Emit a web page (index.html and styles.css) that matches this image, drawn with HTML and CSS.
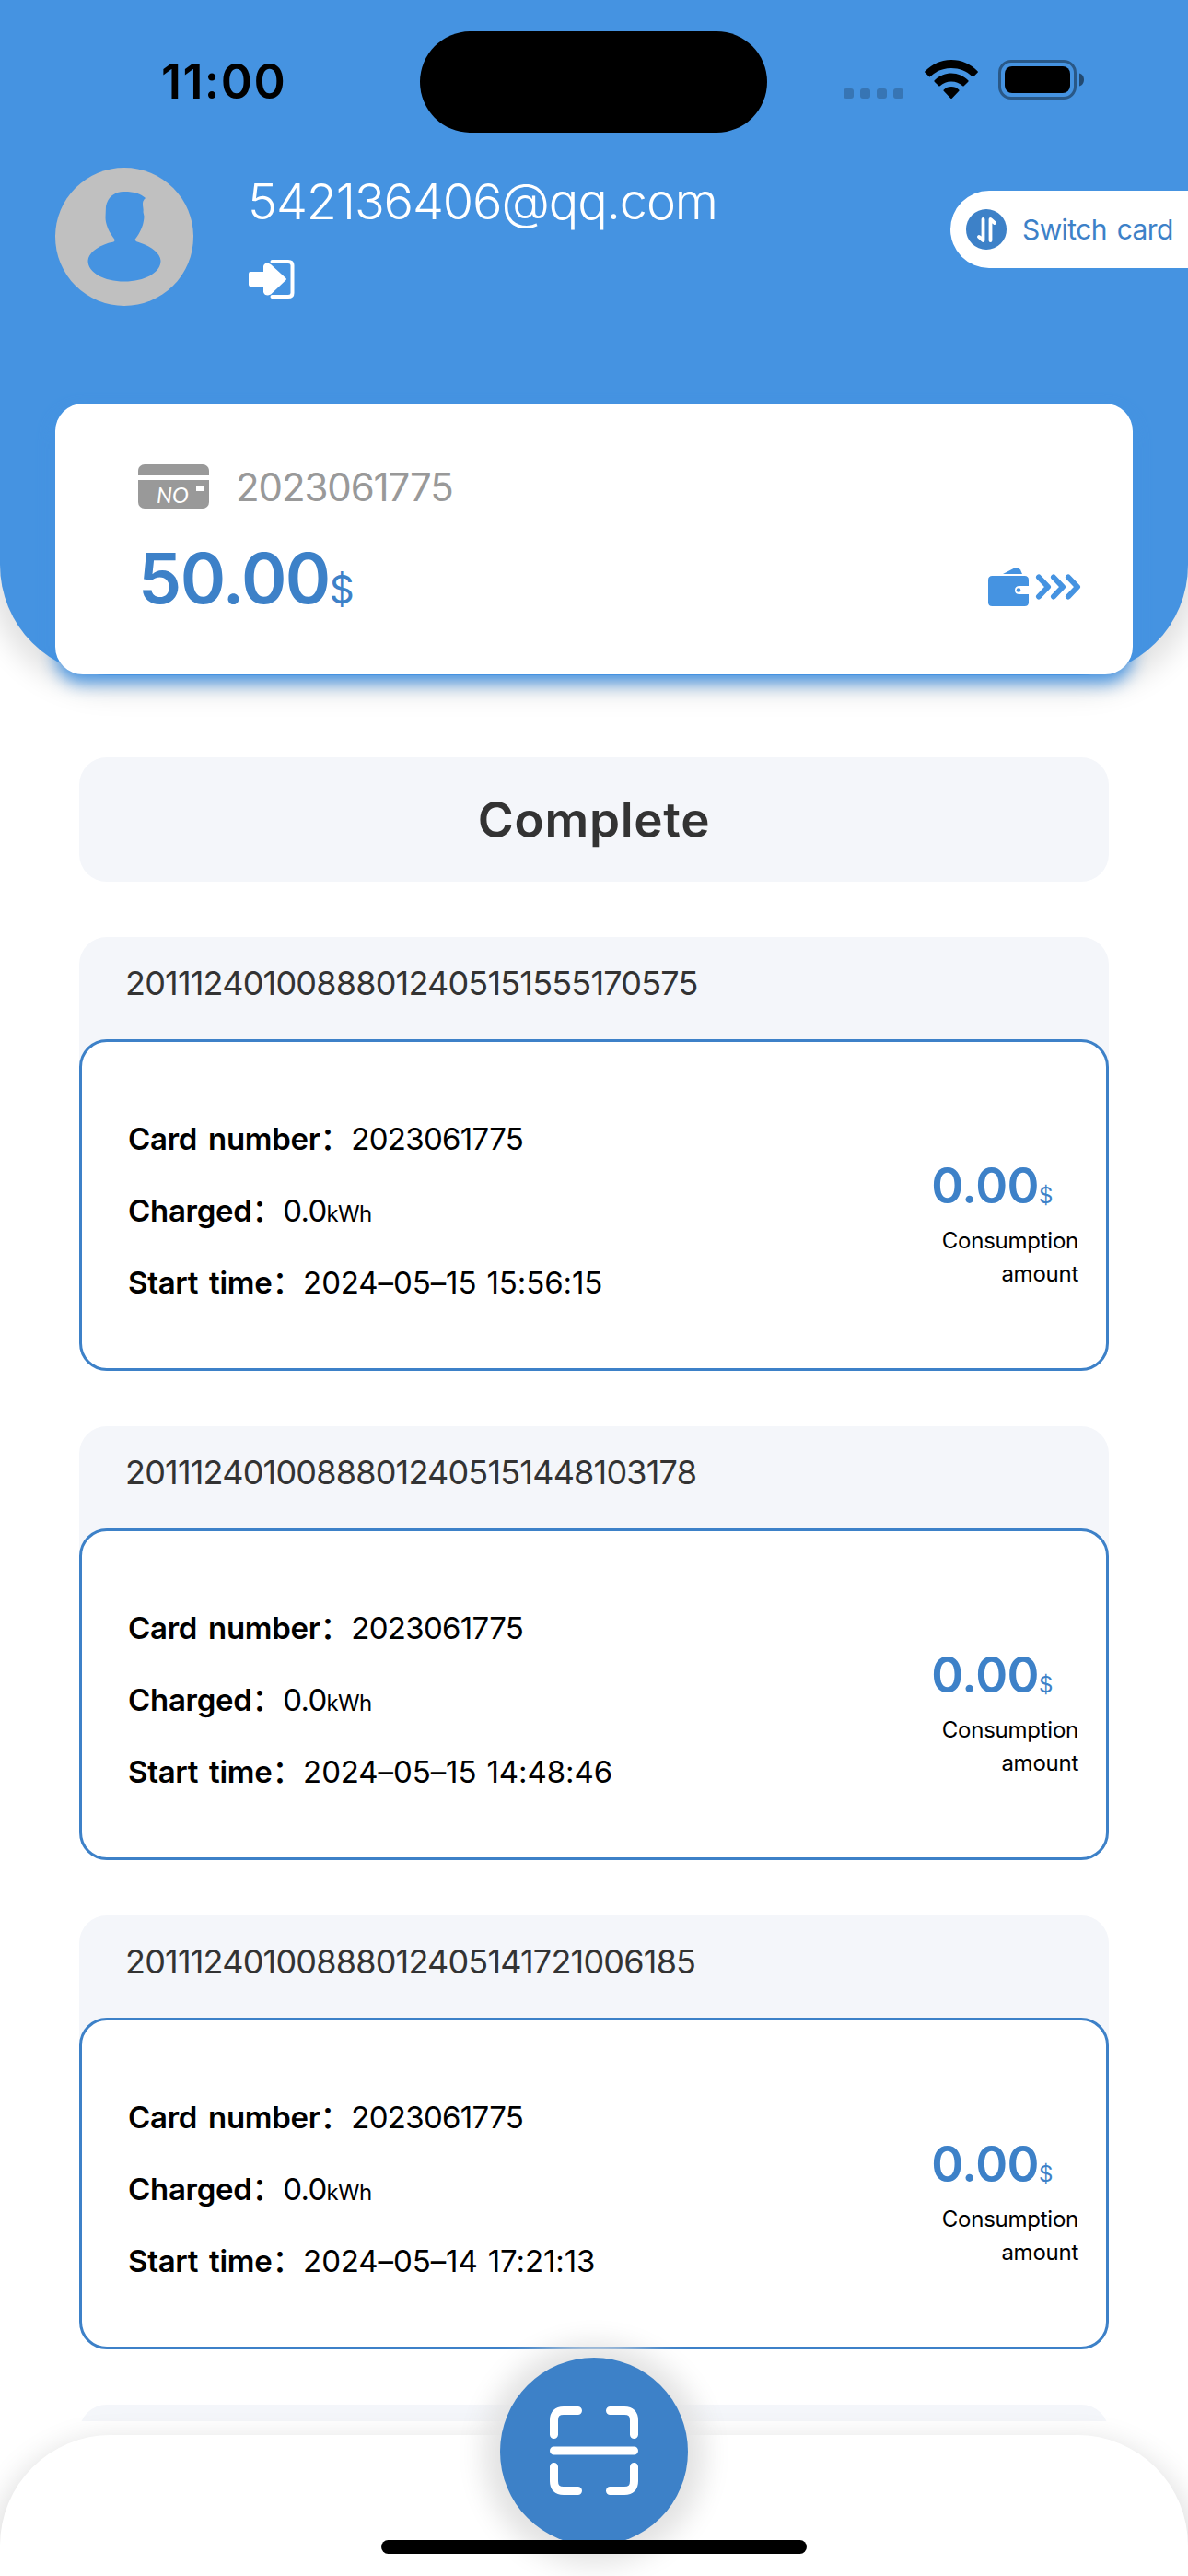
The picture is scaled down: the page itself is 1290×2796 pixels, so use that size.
FILE: index.html
```html
<!DOCTYPE html>
<html lang="en">
<head>
    <meta charset="UTF-8">
    <meta name="viewport" content="width=device-width, initial-scale=1.0">
    <title>Charging Card</title>
    <link rel="stylesheet" href="styles.css">
</head>
<body>
    <div class="header">
        <div class="status-bar">
            <span class="time">11:00</span>
            <div class="island"></div>
            <div class="status-icons">
                <div class="signal"><i></i><i></i><i></i><i></i></div>
                <svg class="wifi" width="58" height="43" viewBox="0 0 58 43">
                    <path d="M29 0C18 0 8 4.500 .5 12.200Q-.3 13 .5 13.800L5 18.200Q5.600 18.800 6.300 18C12.500 12 20.500 9 29 9S45.500 12 51.700 18Q52.400 18.800 53 18.200L57.500 13.800Q58.300 13 57.500 12.200C50 4.500 40 0 29 0Z"/>
                    <path d="M29 14.500C22 14.500 15.600 17.300 10.700 22.300Q10 23 10.700 23.700L15.300 28.200Q16 28.800 16.700 28.200C20 25.200 24.300 23.500 29 23.500S38 25.200 41.300 28.200Q42 28.800 42.700 28.200L47.300 23.700Q48 23 47.300 22.300C42.400 17.300 36 14.500 29 14.500Z"/>
                    <path d="M29 29C25.800 29 23 30.200 20.700 32.400Q20 33 20.700 33.700L28.300 41.700Q29 42.400 29.700 41.700L37.300 33.700Q38 33 37.300 32.400C35 30.200 32.200 29 29 29Z"/>
                </svg>
                <svg class="battery" width="94" height="43" viewBox="0 0 94 43">
                    <rect x="1.500" y="1.500" width="82" height="40" rx="12.500" fill="none" stroke="#000" stroke-width="3" opacity=".4"/>
                    <rect x="7" y="7" width="71" height="29" rx="8"/>
                    <path d="M88 14.500C91.500 15.500 93 18.500 93 21.500S91.500 27.500 88 28.500Z" opacity=".5"/>
                </svg>
            </div>
        </div>

        <div class="user">
            <svg class="avatar" width="150" height="150" viewBox="0 0 150 150">
                <circle cx="75" cy="75" r="75" fill="#c0c0c0"/>
                <path d="M55 42C57 32 64 26 75 26C86 26 93 28.500 98 33C96 35 95 36 95 39C95 43 96 45 95.500 48L96.500 53C96 63 92 71 86.500 78C87 80 89 80.500 92 81.500C105 86 114 93 114.500 101C114.500 114 97 123.500 75 123.500S35.500 114 35.500 101C36 93 45 86 57 82C62 81 65 81 64.500 78C59 71 54.500 62 54.500 54Z" fill="#4593e1"/>
            </svg>
            <div class="user-info">
                <div class="email">542136406@qq.com</div>
                <svg class="logout" width="50" height="42" viewBox="0 0 50 42">
                    <path d="M2 13H16V7Q17 3 21 3.500L24 5L40.500 20Q41.500 21 40.500 22L24 37.500L21 38.500Q17 38.500 16 35V29H2Q0 29 0 27V15Q0 13 2 13Z" fill="#fff"/>
                    <path d="M25.500 2H43Q47.500 2 47.500 6V36Q47.500 40 43 40H25.500" fill="none" stroke="#fff" stroke-width="4" stroke-linecap="round"/>
                </svg>
            </div>
            <div class="switch-card">
                <svg width="44" height="44" viewBox="0 0 44 44">
                    <circle cx="22" cy="22" r="22" fill="#3d81c8"/>
                    <path d="M18.500 11V34L14 30M26.500 34V11L31 15" fill="none" stroke="#fff" stroke-width="3.800" stroke-linecap="round" stroke-linejoin="round"/>
                </svg>
                <span>Switch card</span>
            </div>
        </div>

        <div class="balance-card">
            <div class="card-no">
                <div class="card-icon"><span>NO</span></div>
                <span class="card-number">2023061775</span>
            </div>
            <div class="balance">
                <div class="balance-value">50.00<small>$</small></div>
                <svg class="recharge" width="101" height="43" viewBox="0 0 101 43">
                    <g fill="#4593e1">
                        <path d="M16 7L28.500 .6Q33-.8 35 2.500L37 7Z"/>
                        <path d="M4.500 9H39.500Q44 9 44 13.500V20H34Q29 20 29 24.500T34 29H44V37.500Q44 42 39.500 42H4.500Q0 42 0 37.500V13.500Q0 9 4.500 9Z"/>
                        <circle cx="33" cy="24.500" r="2.300"/>
                    </g>
                    <path d="M55 10.500L65 21L55 31.500M71 10.500L81 21L71 31.500M87 10.500L97 21L87 31.500" fill="none" stroke="#4593e1" stroke-width="6" stroke-linecap="round" stroke-linejoin="round"/>
                </svg>
            </div>
        </div>
    </div>

    <div class="content">
        <div class="tab">Complete</div>

        <div class="order">
            <div class="order-id">20111240100888012405151555170575</div>
            <div class="order-body">
                <div class="order-info">
                    <p><b>Card number<i>：</i></b>2023061775</p>
                    <p><b>Charged<i>：</i></b>0.0<small>kWh</small></p>
                    <p><b>Start time<i>：</i></b><span class="date">2024–05–15 15:56:15</span></p>
                </div>
                <div class="order-amount">
                    <div class="amount">0.00<small>$</small></div>
                    <div class="amount-label">Consumption amount</div>
                </div>
            </div>
        </div>

        <div class="order">
            <div class="order-id">20111240100888012405151448103178</div>
            <div class="order-body">
                <div class="order-info">
                    <p><b>Card number<i>：</i></b>2023061775</p>
                    <p><b>Charged<i>：</i></b>0.0<small>kWh</small></p>
                    <p><b>Start time<i>：</i></b><span class="date">2024–05–15 14:48:46</span></p>
                </div>
                <div class="order-amount">
                    <div class="amount">0.00<small>$</small></div>
                    <div class="amount-label">Consumption amount</div>
                </div>
            </div>
        </div>

        <div class="order">
            <div class="order-id">20111240100888012405141721006185</div>
            <div class="order-body">
                <div class="order-info">
                    <p><b>Card number<i>：</i></b>2023061775</p>
                    <p><b>Charged<i>：</i></b>0.0<small>kWh</small></p>
                    <p><b>Start time<i>：</i></b><span class="date">2024–05–14 17:21:13</span></p>
                </div>
                <div class="order-amount">
                    <div class="amount">0.00<small>$</small></div>
                    <div class="amount-label">Consumption amount</div>
                </div>
            </div>
        </div>

        <div class="order"></div>
    </div>

    <div class="tab-bar">
        <div class="scan">
            <svg width="96" height="96" viewBox="0 0 96 96" fill="none" stroke="#fff" stroke-width="9" stroke-linecap="round">
                <path d="M4.500 30.500V15Q4.500 4.500 15 4.500H30.500M65.500 4.500H81Q91.500 4.500 91.500 15V30.500M4.500 65.500V81Q4.500 91.500 15 91.500H30.500M65.500 91.500H81Q91.500 91.500 91.500 81V65.500M4.500 48H91.500"/>
            </svg>
        </div>
        <div class="home-indicator"></div>
    </div>
</body>
</html>
```

FILE: styles.css
```css
* {
    margin: 0;
    padding: 0;
    box-sizing: border-box;
}

body {
    font-family: Inter, "Noto Sans CJK SC", sans-serif;
    background: #fff;
    color: #000;
    width: 1290px;
    height: 2796px;
    display: flex;
    flex-direction: column;
    overflow: hidden;
}

svg {
    display: block;
    flex-shrink: 0;
}

.header {
    height: 733px;
    flex-shrink: 0;
    background: #4593e1;
    border-radius: 0 0 120px 120px;
    box-shadow: 0 3px 30px 15px #e2e2e2;
}

.status-bar {
    height: 177px;
    padding: 34px 112px 0 175px;
    display: flex;
    align-items: flex-start;
    justify-content: space-between;
}

.time {
    width: 281px;
    font-size: 52px;
    font-weight: 600;
    line-height: 110px;
    letter-spacing: 1.4px;
}

.island {
    width: 377px;
    height: 110px;
    border-radius: 55px;
    background: #000;
}

.status-icons {
    flex: 1;
    display: flex;
    align-items: flex-end;
    justify-content: flex-end;
    height: 74px;
}

.signal {
    display: flex;
    gap: 7px;
    margin-right: 23px;
    margin-bottom: 1px;
}

.signal i {
    width: 11px;
    height: 11px;
    border-radius: 3px;
    background: rgba(0, 0, 0, 0.2);
}

.wifi {
    margin-right: 22px;
}

.user {
    display: flex;
    align-items: flex-start;
    padding: 5px 0 0 60px;
    height: 261px;
}

.user-info {
    flex: 1;
    padding-left: 60px;
}

.email {
    margin-left: -1px;
    color: #fff;
    font-size: 54px;
    font-weight: 300;
    line-height: 73px;
    letter-spacing: -1.1px;
}

.logout {
    margin-top: 27px;
}

.switch-card {
    display: flex;
    align-items: center;
    gap: 17px;
    width: 258px;
    height: 84px;
    margin-top: 25px;
    padding-left: 17px;
    border-radius: 42px 0 0 42px;
    background: #fff;
    color: #3d81c8;
    font-size: 30px;
    letter-spacing: -0.6px;
    word-spacing: 3px;
    white-space: nowrap;
}

.balance-card {
    height: 294px;
    margin: 0 60px;
    padding: 60px 56px 0 90px;
    border-radius: 30px;
    background: #fff;
    box-shadow: 0 9px 18px #4593e1;
}

.card-no {
    display: flex;
    align-items: center;
    gap: 29px;
    height: 60px;
}

.card-icon {
    width: 77px;
    height: 48px;
    border-radius: 7px;
    background: linear-gradient(#999 12px, #fff 12px, #fff 17px, #999 17px);
    color: #fff;
    font: italic 400 24px/24px Lato, sans-serif;
    padding: 21px 6px 0 20px;
    display: flex;
    justify-content: space-between;
}

.card-icon::after {
    content: "";
    width: 8px;
    height: 6px;
    margin-top: 2px;
    background: #fff;
}

.card-number {
    color: #999;
    font-size: 42px;
    letter-spacing: -1.1px;
}

.balance {
    display: flex;
    justify-content: space-between;
}

.balance-value {
    color: #3d81c8;
    font-size: 75px;
    font-weight: 600;
    line-height: 140px;
    letter-spacing: -1.5px;
}

.balance-value small {
    font-size: 42px;
    font-weight: 400;
}

.recharge {
    margin-top: 58px;
}

.content {
    flex: 1;
    min-height: 0;
    overflow: hidden;
    padding: 89px 86px 0;
    margin-bottom: 15px;
}

.tab {
    height: 135px;
    line-height: 136px;
    text-align: center;
    border-radius: 30px;
    background: #f4f6fa;
    color: #333;
    font-size: 53px;
    font-weight: 600;
    letter-spacing: 0.7px;
}

.order {
    height: 471px;
    margin-top: 60px;
    border-radius: 30px;
    background: #f4f6fa;
}

.order-id {
    height: 111px;
    padding-left: 50px;
    line-height: 101px;
    color: #333;
    font-size: 36px;
    letter-spacing: -0.8px;
}

.order-body {
    height: 360px;
    padding: 12px 30px 0 50px;
    border: 3px solid #3d81c8;
    border-radius: 30px;
    background: #fff;
    display: flex;
    align-items: center;
    justify-content: space-between;
}

.order-info p {
    font-size: 33px;
    height: 78px;
    line-height: 78px;
    letter-spacing: -0.7px;
}

.order-info b {
    font-weight: 600;
    letter-spacing: -0.3px;
    word-spacing: 4px;
}

.order-info i {
    font: normal 500 34px/1 "Noto Sans CJK SC", sans-serif;
}

.order-info small {
    font-size: 24px;
}

.order-info .date {
    letter-spacing: -0.1px;
    word-spacing: 2px;
}

.order-amount {
    width: 160px;
    margin-top: 28px;
    text-align: right;
}

.amount {
    padding-right: 28px;
    color: #3d81c8;
    font-size: 53px;
    font-weight: 600;
    line-height: 62px;
    letter-spacing: -0.5px;
    display: flex;
    justify-content: flex-end;
    align-items: baseline;
}

.amount small {
    font-size: 24px;
    font-weight: 400;
}

.amount-label {
    font-size: 24px;
    line-height: 36px;
    letter-spacing: -0.25px;
}

.tab-bar {
    position: relative;
    flex-shrink: 0;
    height: 153px;
    border-radius: 120px 120px 0 0;
    background: #fff;
    box-shadow: 0 15px 30px 12px #e2e2e2;
}

.scan {
    position: absolute;
    left: 543px;
    top: -84px;
    width: 204px;
    height: 204px;
    border-radius: 50%;
    background: #3d81c8;
    box-shadow: 0 3px 30px 18px #e2e2e2;
    display: flex;
    align-items: center;
    justify-content: center;
}

.scan svg {
    margin-top: -2px;
}

.home-indicator {
    position: absolute;
    left: 414px;
    bottom: 24px;
    width: 462px;
    height: 15px;
    border-radius: 8px;
    background: #000;
}
```
